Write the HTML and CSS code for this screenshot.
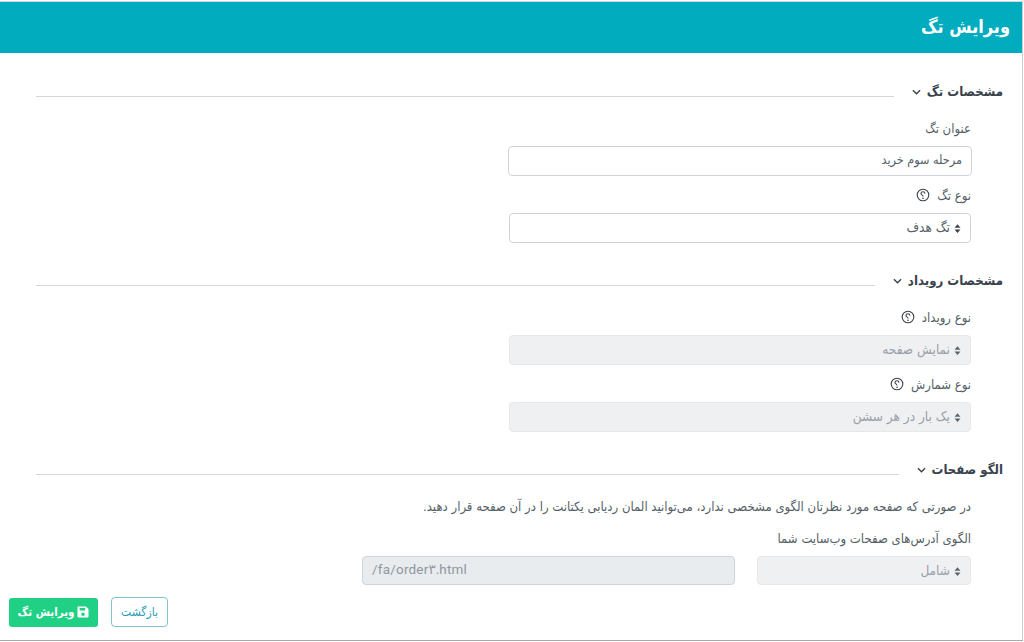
FILE: index.html
```html
<!DOCTYPE html>
<html lang="fa" dir="rtl">
<head>
<meta charset="utf-8">
<title>ویرایش تگ</title>
<link rel="stylesheet" href="styles.css">
</head>
<body>
<main class="card">
  <header class="card-head"><h1>ویرایش تگ</h1></header>
  <div class="card-body">
    <section class="group">
      <div class="legend legend-first">
        <h2>مشخصات تگ</h2>
        <svg class="chev" viewBox="0 0 10 6"><path d="M1 1l4 4 4-4"/></svg>
        <span class="rule"></span>
      </div>
      <div class="fields">
        <label class="label">عنوان تگ</label>
        <div class="control wide">مرحله سوم خرید</div>
        <label class="label label-help">نوع تگ
          <svg class="help" viewBox="0 0 14 14"><circle cx="7" cy="7" r="5.8"/><path d="M9 5.6C8.9 4.4 8 3.7 7 3.7c-1.2 0-2 .8-2 1.8 0 1.4 2 1.3 2 2.9"/><circle class="dot" cx="7" cy="10.3" r=".8"/></svg>
        </label>
        <div class="control select">
          <svg class="sort" viewBox="0 0 8 10"><path d="M4 0l3.4 4H.6zM4 10L.6 6h6.8z"/></svg>تگ هدف
        </div>
      </div>
    </section>

    <section class="group">
      <div class="legend">
        <h2>مشخصات رویداد</h2>
        <svg class="chev" viewBox="0 0 10 6"><path d="M1 1l4 4 4-4"/></svg>
        <span class="rule"></span>
      </div>
      <div class="fields">
        <label class="label label-help">نوع رویداد
          <svg class="help" viewBox="0 0 14 14"><circle cx="7" cy="7" r="5.8"/><path d="M9 5.6C8.9 4.4 8 3.7 7 3.7c-1.2 0-2 .8-2 1.8 0 1.4 2 1.3 2 2.9"/><circle class="dot" cx="7" cy="10.3" r=".8"/></svg>
        </label>
        <div class="control select disabled">
          <svg class="sort" viewBox="0 0 8 10"><path d="M4 0l3.4 4H.6zM4 10L.6 6h6.8z"/></svg>نمایش صفحه
        </div>
        <label class="label label-help">نوع شمارش
          <svg class="help" viewBox="0 0 14 14"><circle cx="7" cy="7" r="5.8"/><path d="M9 5.6C8.9 4.4 8 3.7 7 3.7c-1.2 0-2 .8-2 1.8 0 1.4 2 1.3 2 2.9"/><circle class="dot" cx="7" cy="10.3" r=".8"/></svg>
        </label>
        <div class="control select disabled">
          <svg class="sort" viewBox="0 0 8 10"><path d="M4 0l3.4 4H.6zM4 10L.6 6h6.8z"/></svg>یک بار در هر سشن
        </div>
      </div>
    </section>

    <section class="group">
      <div class="legend">
        <h2>الگو صفحات</h2>
        <svg class="chev" viewBox="0 0 10 6"><path d="M1 1l4 4 4-4"/></svg>
        <span class="rule"></span>
      </div>
      <div class="pattern">
        <p class="note">در صورتی که صفحه مورد نظرتان الگوی مشخصی ندارد، می‌توانید المان ردیابی یکتانت را در آن صفحه قرار دهید.</p>
        <label class="label label-pattern">الگوی آدرس‌های صفحات وب‌سایت شما</label>
        <div class="pattern-row">
          <div class="control select disabled match">
            <svg class="sort" viewBox="0 0 8 10"><path d="M4 0l3.4 4H.6zM4 10L.6 6h6.8z"/></svg>شامل
          </div>
          <div class="control url" dir="ltr">/fa/order۳.html</div>
        </div>
      </div>
    </section>

    <div class="actions">
      <a class="btn btn-back">بازگشت</a>
      <a class="btn btn-save">
        <svg class="save" viewBox="0 0 12 12"><path fill-rule="evenodd" d="M1.5 0.5h7.4L11.5 3v7.2c0 .7-.5 1.3-1.2 1.3H1.7c-.7 0-1.2-.6-1.2-1.3V1.8C.5 1 1 .5 1.5.5zM2.6 2v2.6h5.6V2zM6 6.4a1.8 1.8 0 100 3.6 1.8 1.8 0 000-3.6z"/></svg>ویرایش تگ
      </a>
    </div>
  </div>
</main>
</body>
</html>
```

FILE: styles.css
```css
* { box-sizing: border-box; }
html, body { margin: 0; padding: 0; background: #fff; }
body {
  direction: ltr;
  width: 1024px;
  height: 642px;
  overflow: hidden;
  font-family: "DejaVu Sans Condensed", "DejaVu Sans", sans-serif;
  font-stretch: condensed;
  color: #4a5560;
  padding-top: 2px;
  background: #fff;
}
.card {
  direction: rtl;
  width: 1023px;
  height: 638px;
  border-right: 1px solid #cfcfcf;
  background: #fff;
  box-shadow: 0 1px 0 #a9a9a9, 0 -1px 0 #d8d8d8;
  display: flex;
  flex-direction: column;
}
.card-head {
  height: 51px;
  background: #00acbd;
  display: flex;
  align-items: center;
  padding-right: 12px;
  flex: none;
}
.card-head h1 {
  margin: 0 0 3px;
  font-size: 18px;
  font-weight: 700;
  color: #fff;
  letter-spacing: -0.5px;
}
.card-body { flex: 1; padding: 0 19px 0 9px; display: flex; flex-direction: column; }
.legend {
  display: flex;
  align-items: center;
  height: 20px;
  margin-left: 27px;
}
.legend-first { margin-top: 29px; }
.legend h2 {
  margin: 0 0 1px;
  font-size: 13.1px;
  font-weight: 700;
  color: #39434d;
  white-space: nowrap;
}
.chev { width: 9px; height: 6px; margin: 0 6px 0 0; flex: none; fill: none; stroke: #39434d; stroke-width: 1.5; }
.rule { flex: 1; height: 1px; margin: 9px 18px 0 0; background: #d4d6da; }
.fields { width: 462px; margin: 0 32px 0 0; }
.label {
  display: flex;
  align-items: center;
  gap: 10px;
  height: 18px;
  padding-bottom: 2px;
  font-size: 13px;
  color: #555f68;
}
.fields > .label:first-child { margin-top: 18px; }
.fields .control + .label { margin-top: 11px; }
.label-help { gap: 7px; }
.control {
  height: 30px;
  margin-top: 8px;
  border: 1px solid #ced4da;
  border-radius: 4px;
  padding: 0 9px 3px;
  display: flex;
  align-items: center;
  font-size: 12.5px;
  color: #555f68;
  background: #fff;
}
.wide { width: 464px; margin-right: -1px; }
.select { gap: 4px; font-size: 13.5px; padding-bottom: 2px; }
.disabled { background: #eff0f2; border-color: #e6e8ea; color: #98a0a8; }
.sort { width: 7px; height: 9px; flex: none; fill: #3a444e; margin-top: 3px; }
.disabled .sort { fill: #5b646d; }
.help { width: 14px; height: 14px; flex: none; fill: none; stroke: #39434d; stroke-width: 1.1; }
.help .dot { fill: #39434d; stroke: none; }
.group:nth-of-type(2) .legend { margin-top: 28px; }
.group:nth-of-type(3) .legend { margin-top: 28px; }
.note { margin: 18px 0 0; font-size: 13px; line-height: 18px; color: #555f68; }
.pattern { margin-right: 32px; }
.label-pattern { margin-top: 14px; }
.pattern-row { display: flex; gap: 22px; margin-top: 8px; }
.pattern-row .control { margin-top: 0; height: 29px; }
.match { width: 214px; }
.url {
  width: 373px;
  background: #e9ecef;
  border-color: #ced4da;
  font-family: Roboto, "DejaVu Sans", sans-serif;
  font-stretch: normal;
  font-size: 13.5px;
  letter-spacing: 0.2px;
  color: #8f979e;
}
.actions {
  margin-top: 12px;
  display: flex;
  justify-content: flex-end;
  align-items: center;
  gap: 13px;
}
.btn {
  height: 30px;
  border-radius: 4px;
  display: flex;
  align-items: center;
  justify-content: center;
  font-size: 12px;
}
.btn-back { width: 57px; border: 1px solid #7fc3d3; color: #2aa0b5; }
.btn-save {
  width: 89px;
  background: #20d185;
  color: #fff;
  font-weight: 700;
  font-size: 11.5px;
  gap: 3px;
  height: 29px;
  border-radius: 3px;
}
.save { width: 12px; height: 12px; fill: #fff; flex: none; }
```
